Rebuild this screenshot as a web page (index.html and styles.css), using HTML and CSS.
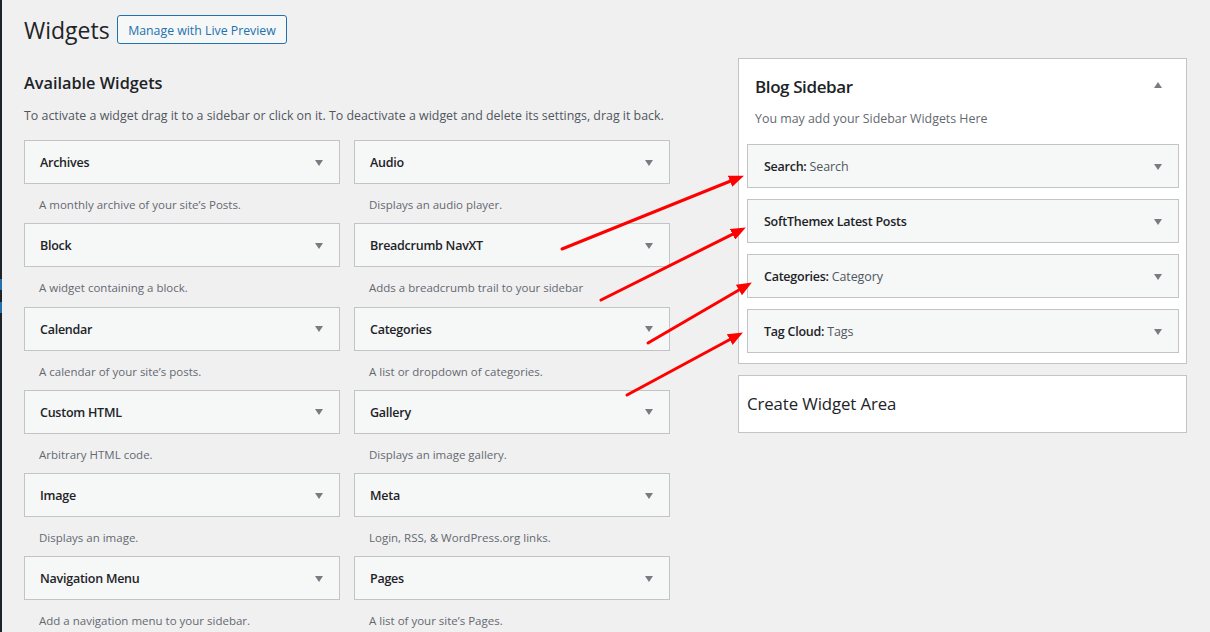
FILE: index.html
```html
<!DOCTYPE html>
<html lang="en">
<head>
<meta charset="utf-8">
<title>Widgets</title>
<link rel="stylesheet" href="styles.css">
</head>
<body>
  <div class="menu-edge">
    <span class="edge-blue first"></span>
    <span class="edge-blue second"></span>
  </div>
  <main class="wrap">
    <header class="page-head">
      <h1 class="page-title">Widgets</h1>
      <a class="btn-outline" href="#">Manage with Live Preview</a>
    </header>
    <div class="columns">
      <section class="available">
        <h2 class="section-title">Available Widgets</h2>
        <p class="section-desc">To activate a widget drag it to a sidebar or click on it. To deactivate a widget and delete its settings, drag it back.</p>
        <div class="widget-grid">
          <div class="widget-item"><div class="widget-box"><span class="widget-title">Archives</span><span class="caret-down"></span></div><p class="widget-desc">A monthly archive of your site’s Posts.</p></div>
          <div class="widget-item"><div class="widget-box"><span class="widget-title">Audio</span><span class="caret-down"></span></div><p class="widget-desc">Displays an audio player.</p></div>
          <div class="widget-item"><div class="widget-box"><span class="widget-title">Block</span><span class="caret-down"></span></div><p class="widget-desc">A widget containing a block.</p></div>
          <div class="widget-item"><div class="widget-box"><span class="widget-title">Breadcrumb NavXT</span><span class="caret-down"></span></div><p class="widget-desc">Adds a breadcrumb trail to your sidebar</p></div>
          <div class="widget-item"><div class="widget-box"><span class="widget-title">Calendar</span><span class="caret-down"></span></div><p class="widget-desc">A calendar of your site’s posts.</p></div>
          <div class="widget-item"><div class="widget-box"><span class="widget-title">Categories</span><span class="caret-down"></span></div><p class="widget-desc">A list or dropdown of categories.</p></div>
          <div class="widget-item"><div class="widget-box"><span class="widget-title">Custom HTML</span><span class="caret-down"></span></div><p class="widget-desc">Arbitrary HTML code.</p></div>
          <div class="widget-item"><div class="widget-box"><span class="widget-title">Gallery</span><span class="caret-down"></span></div><p class="widget-desc">Displays an image gallery.</p></div>
          <div class="widget-item"><div class="widget-box"><span class="widget-title">Image</span><span class="caret-down"></span></div><p class="widget-desc">Displays an image.</p></div>
          <div class="widget-item"><div class="widget-box"><span class="widget-title">Meta</span><span class="caret-down"></span></div><p class="widget-desc">Login, RSS, &amp; WordPress.org links.</p></div>
          <div class="widget-item"><div class="widget-box"><span class="widget-title">Navigation Menu</span><span class="caret-down"></span></div><p class="widget-desc">Add a navigation menu to your sidebar.</p></div>
          <div class="widget-item"><div class="widget-box"><span class="widget-title">Pages</span><span class="caret-down"></span></div><p class="widget-desc">A list of your site’s Pages.</p></div>
        </div>
      </section>
      <aside class="sidebars">
        <div class="sidebar-box">
          <div class="sidebar-head">
            <h2 class="sidebar-title">Blog Sidebar</h2>
            <span class="caret-up"></span>
          </div>
          <p class="sidebar-desc">You may add your Sidebar Widgets Here</p>
          <div class="sidebar-widgets">
            <div class="widget-box in-sidebar"><span class="widget-title">Search: <span class="instance">Search</span></span><span class="caret-down"></span></div>
            <div class="widget-box in-sidebar"><span class="widget-title">SoftThemex Latest Posts</span><span class="caret-down"></span></div>
            <div class="widget-box in-sidebar"><span class="widget-title">Categories: <span class="instance">Category</span></span><span class="caret-down"></span></div>
            <div class="widget-box in-sidebar"><span class="widget-title">Tag Cloud: <span class="instance">Tags</span></span><span class="caret-down"></span></div>
          </div>
        </div>
        <div class="create-box">
          <h2 class="create-title">Create Widget Area</h2>
        </div>
      </aside>
    </div>
  </main>
  <svg class="arrows" width="1210" height="632" viewBox="0 0 1210 632" aria-hidden="true">
    <defs>
      <marker id="head" markerUnits="userSpaceOnUse" markerWidth="15" markerHeight="12" refX="6" refY="6" orient="auto">
        <path d="M0,0 L15,6 L0,12 Z" fill="#ff0000"/>
      </marker>
    </defs>
    <line x1="562" y1="249" x2="735.6" y2="179" marker-end="url(#head)"/>
    <line x1="601" y1="300" x2="737.8" y2="231.6" marker-end="url(#head)"/>
    <line x1="648" y1="343" x2="744.1" y2="287" marker-end="url(#head)"/>
    <line x1="627" y1="395" x2="735" y2="336.8" marker-end="url(#head)"/>
  </svg>
</body>
</html>
```

FILE: styles.css
```css
* { box-sizing: border-box; }

html, body {
  margin: 0;
  height: 632px;
  overflow: hidden;
}

body {
  display: flex;
  position: relative;
  background: #f0f0f1;
  font-family: "Open Sans", "Noto Sans", sans-serif;
  font-size: 12.4px;
  color: #3c434a;
}

.menu-edge {
  width: 2px;
  flex: none;
  background: #1d2327;
  display: flex;
  flex-direction: column;
}

.edge-blue {
  display: block;
  height: 11px;
  background: #2271b1;
}

.edge-blue.first { margin-top: 279px; }
.edge-blue.second { margin-top: 12px; }

.wrap {
  flex: 1;
  padding-left: 22px;
}

.page-head {
  display: flex;
  align-items: flex-start;
  gap: 7px;
  margin-top: 15px;
  height: 29px;
}

.page-title {
  margin: 1px 0 0;
  font-size: 23px;
  line-height: 29px;
  font-weight: 400;
  color: #1d2327;
}

.btn-outline {
  display: inline-flex;
  align-items: center;
  height: 29px;
  padding: 1px 10.5px 0;
  border: 1px solid #2271b1;
  border-radius: 3px;
  background: #f6f7f7;
  color: #2271b1;
  text-decoration: none;
  font-size: 12.3px;
}

.columns {
  display: flex;
  align-items: flex-start;
}

.available {
  width: 646px;
  flex: none;
}

.section-title {
  margin: 28px 0 0;
  font-size: 16.3px;
  line-height: 22px;
  font-weight: 600;
  color: #1d2327;
}

.section-desc {
  margin: 13px 0 0;
  line-height: 18px;
  color: #50575e;
  white-space: nowrap;
}

.widget-grid {
  margin-top: 15px;
  display: grid;
  grid-template-columns: 316px 316px;
  column-gap: 14px;
}

.widget-box {
  height: 44px;
  display: flex;
  align-items: center;
  justify-content: space-between;
  padding: 1px 16px 0 15px;
  background: #f6f7f7;
  border: 1px solid #c3c4c7;
}

.widget-title {
  font-size: 12.5px;
  font-weight: 600;
  letter-spacing: -0.25px;
  color: #1d2327;
}

.instance {
  font-weight: 400;
  letter-spacing: -0.1px;
  color: #50575e;
}

.caret-down,
.caret-up {
  width: 0;
  height: 0;
  border-left: 4px solid transparent;
  border-right: 4px solid transparent;
}

.caret-down { border-top: 6px solid #787c82; }
.caret-up { border-bottom: 6px solid #787c82; }

.widget-desc {
  margin: 0;
  height: 39.3px;
  padding: 12px 0 0 15px;
  font-size: 11.5px;
  line-height: 18px;
  color: #646970;
}

.sidebars {
  margin-left: 68px;
  margin-top: 14px;
  width: 449px;
  flex: none;
}

.sidebar-box {
  background: #fff;
  border: 1px solid #c3c4c7;
  padding: 16px 7px 10px 8px;
}

.sidebar-head {
  display: flex;
  align-items: center;
  justify-content: space-between;
  padding: 0 17px 0 8px;
}

.caret-up { margin-top: -4px; }

.sidebar-title {
  margin: 0;
  font-size: 17px;
  line-height: 24px;
  font-weight: 600;
  letter-spacing: -0.4px;
  color: #1d2327;
}

.sidebar-desc {
  margin: 11px 0 0 8px;
  line-height: 18px;
  color: #646970;
}

.sidebar-widgets {
  margin-top: 16px;
  display: flex;
  flex-direction: column;
  gap: 11px;
}

.widget-box.in-sidebar {
  padding: 1px 16px 0 16px;
}

.create-box {
  margin-top: 11px;
  height: 58px;
  background: #fff;
  border: 1px solid #c3c4c7;
  display: flex;
  align-items: center;
  padding-left: 8px;
}

.create-title {
  margin: 0;
  font-size: 16.8px;
  line-height: 24px;
  font-weight: 500;
  letter-spacing: -0.1px;
  color: #1d2327;
}

.arrows {
  position: absolute;
  left: 0;
  top: 0;
  pointer-events: none;
}

.arrows line {
  stroke: #ff0000;
  stroke-width: 3;
  stroke-linecap: round;
}
```
